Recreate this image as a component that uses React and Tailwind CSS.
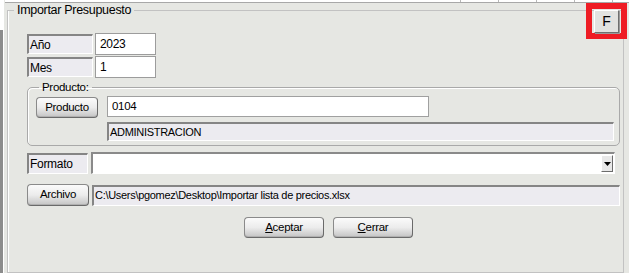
import React from "react";

const font = { fontFamily: '"Liberation Sans", Arial, sans-serif' };

function Btn({ children, className = "" }) {
  return (
    <div
      className={
        "flex items-center justify-center rounded-[4px] border border-[#8a8a8a] border-b-[#6a6a6a] border-r-[#6a6a6a] bg-gradient-to-b from-[#fbfbfb] via-[#ececec] to-[#c4c4c4] text-[11.5px] text-black shadow-[inset_0_-1px_0_#b0b0b0] " +
        className
      }
    >
      {children}
    </div>
  );
}

function Label({ children, className = "" }) {
  return (
    <div
      className={
        "flex items-center border-t-2 border-l-2 border-t-[#858585] border-l-[#858585] border-b border-r border-b-white border-r-white bg-[#ecebf0] pl-[1px] leading-none text-black " +
        className
      }
    >
      {children}
    </div>
  );
}

export default function App() {
  return (
    <div
      className="relative flex h-[273px] w-[629px] overflow-hidden bg-[#e6e7e3] tracking-[-0.3px]"
      style={font}
    >
      {/* left strip */}
      <div className="flex w-[5px] shrink-0">
        <div className="flex w-[3px] flex-col bg-[#8c8c8c]">
          <div className="h-[30px] bg-white" />
        </div>
        <div className="w-[1px] bg-white" />
        <div className="w-[1px] bg-[#e6e7e3]" />
      </div>

      <div className="flex min-w-0 flex-1 flex-col">
        {/* top ruler strip */}
        <div className="flex h-[3px] shrink-0 border-b border-[#a8a8a8] bg-white">
          <div className="w-[455px]" />
          <div className="w-[1px] bg-[#b8b8b8]" />
          <div className="w-[37px]" />
          <div className="w-[1px] bg-[#b8b8b8]" />
          <div className="w-[37px]" />
          <div className="w-[1px] bg-[#b8b8b8]" />
          <div className="w-[37px]" />
          <div className="w-[1px] bg-[#b8b8b8]" />
          <div className="w-[37px]" />
          <div className="w-[1px] bg-[#b8b8b8]" />
        </div>

        <fieldset className="ml-[2px] mr-[5px] flex-1 border border-[#c2c2c2] shadow-[inset_1px_0_0_#ffffff]">
          <legend className="ml-[6px] px-[3px] text-[12.5px] leading-[14px] text-black">
            Importar Presupuesto
          </legend>

          <div className="flex flex-col pl-[19px] pt-[16px]">
            {/* Año */}
            <div className="flex h-[22px] items-center gap-[2px]">
              <Label className="h-[20px] w-[66px] text-[12px]">Año</Label>
              <div className="flex h-[22px] w-[61px] items-center border border-[#9c9c9c] bg-white pl-[4px] text-[12px] text-black">
                2023
              </div>
            </div>
            {/* Mes */}
            <div className="mt-[1px] flex h-[22px] items-center gap-[2px]">
              <Label className="h-[20px] w-[66px] text-[12px]">Mes</Label>
              <div className="flex h-[22px] w-[61px] items-center border border-[#9c9c9c] bg-white pl-[4px] text-[12px] text-black">
                1
              </div>
            </div>

            {/* Producto group */}
            <fieldset className="mr-[3px] mt-[3px] rounded-[5px] border border-[#a9a9a9] pb-[4px] shadow-[inset_1px_1px_0_#ffffff]">
              <legend className="ml-[11px] px-[3px] text-[11.5px] leading-[12px] text-black">
                Producto:
              </legend>
              <div className="grid grid-cols-[62px_1fr] gap-x-[9px] gap-y-[4px] pl-[8px] pr-[5px] pt-[3px]">
                <Btn className="mt-[1px] h-[21px]">Producto</Btn>
                <div className="flex h-[21px] w-[322px] items-center border border-[#a0a0a0] bg-white pl-[4px] text-[11.5px] text-black">
                  0104
                </div>
                <div />
                <Label className="h-[19px] text-[11px]">ADMINISTRACION</Label>
              </div>
            </fieldset>

            {/* Formato */}
            <div className="mt-[6px] flex h-[22px] items-center gap-[3px]">
              <Label className="h-[21px] w-[61px] text-[12px]">Formato</Label>
              <div className="flex h-[22px] w-[524px] items-center justify-end border-t-2 border-l-2 border-t-[#8a8a8a] border-l-[#8a8a8a] border-b border-r border-b-white border-r-white bg-white pr-[1px]">
                <div className="flex h-[17px] w-[12px] items-center justify-center border border-t-white border-l-white border-b-[#6c6c6c] border-r-[#6c6c6c] bg-[#e8e8e8]">
                  <svg width="7" height="4" viewBox="0 0 7 4">
                    <path d="M0 0h7L3.5 4z" fill="#000" />
                  </svg>
                </div>
              </div>
            </div>

            {/* Archivo */}
            <div className="mt-[10px] flex h-[22px] items-center gap-[3px]">
              <Btn className="h-[22px] w-[62px]">Archivo</Btn>
              <Label className="h-[21px] w-[528px] text-[11px]">
                C:\Users\pgomez\Desktop\Importar lista de precios.xlsx
              </Label>
            </div>

            {/* Buttons */}
            <div className="mt-[11px] flex gap-[9px] pl-[217px]">
              <Btn className="h-[21px] w-[80px]">
                <span>
                  <span className="underline">A</span>ceptar
                </span>
              </Btn>
              <Btn className="h-[21px] w-[80px]">
                <span>
                  <span className="underline">C</span>errar
                </span>
              </Btn>
            </div>
          </div>
        </fieldset>
      </div>

      {/* highlighted F button */}
      <div className="absolute left-[586px] top-[3px] flex h-[36px] w-[41px] items-center justify-center border-[6px] border-[#ee1c24]">
        <div className="flex h-[23px] w-[25px] items-center justify-center border border-t-white border-l-white border-b-[#6f6f6f] border-r-[#6f6f6f] bg-[#e2e2e0] text-[14px] text-black shadow-[1px_1px_0_#9a9a9a]">
          F
        </div>
      </div>
    </div>
  );
}
